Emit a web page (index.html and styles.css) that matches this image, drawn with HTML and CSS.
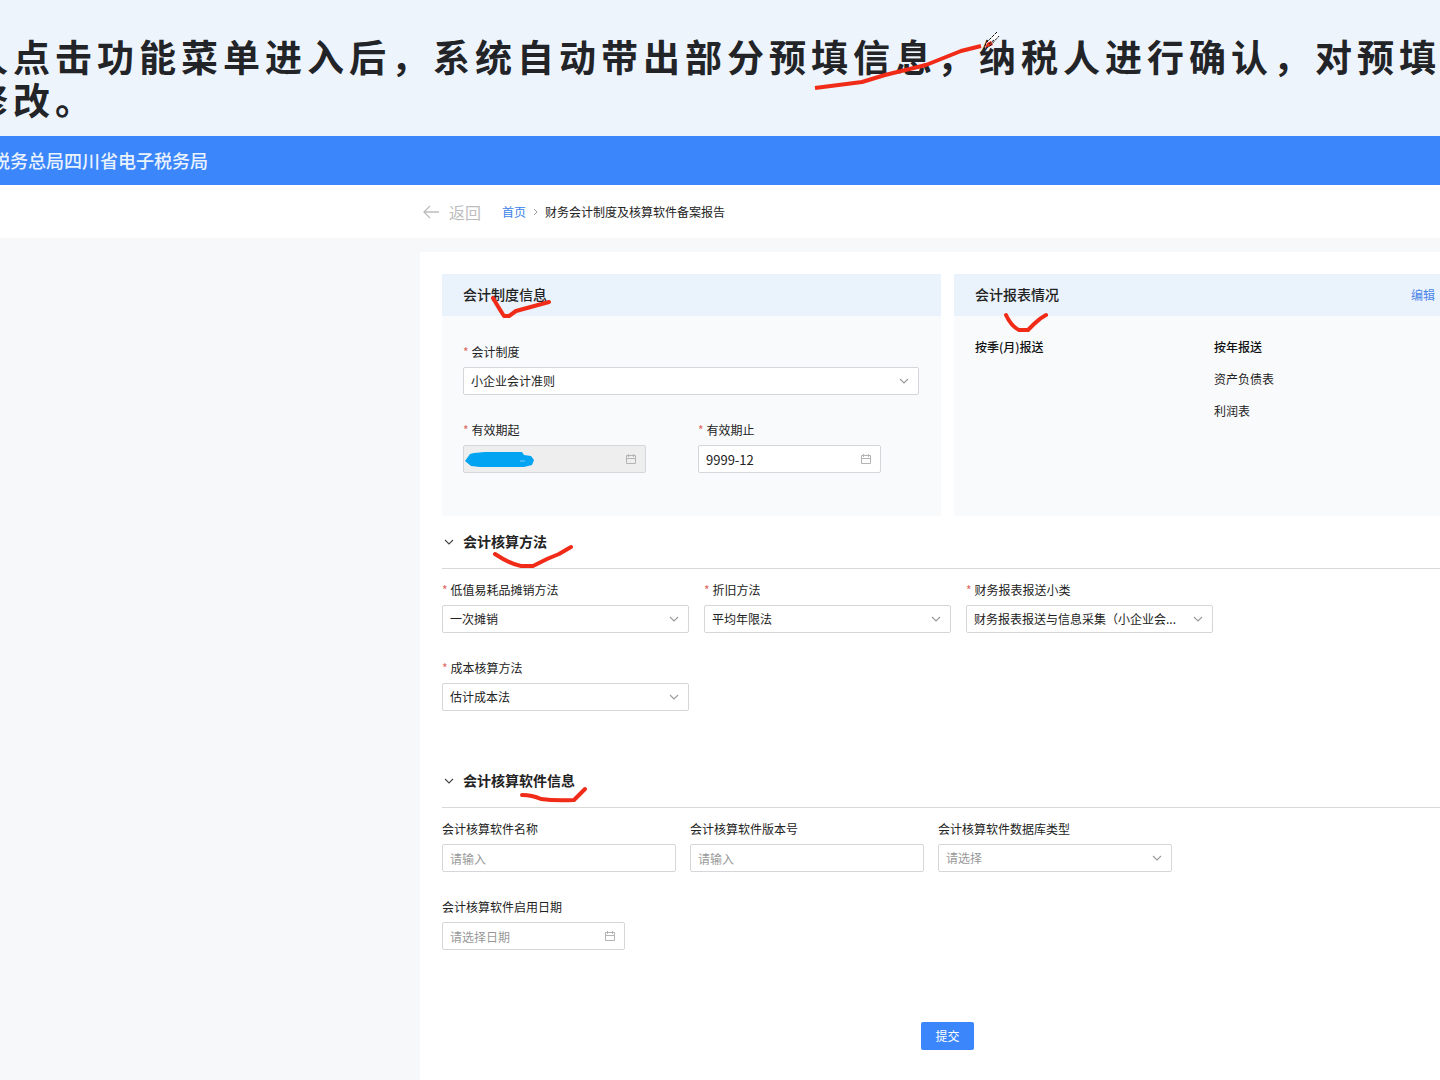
FILE: index.html
```html
<!DOCTYPE html>
<html lang="zh-CN">
<head>
<meta charset="utf-8">
<meta name="viewport" content="width=device-width, initial-scale=1">
<title>财务会计制度及核算软件备案报告</title>
<link rel="stylesheet" href="styles.css">
</head>
<body>
<svg class="symbols" aria-hidden="true">
  <symbol id="chevron" viewBox="0 0 10 10"><path d="M1 3l4 4 4-4" fill="none" stroke="currentColor" stroke-width="1.1"/></symbol>
  <symbol id="calendar" viewBox="0 0 12 12"><path d="M1.500 2.500h9v8h-9zM1.500 5.500h9M3.500 1v3M8.500 1v3" fill="none" stroke="currentColor"/></symbol>
</svg>
<div class="page">
  <p class="caption">人点击功能菜单进入后，系统自动带出部分预填信息，纳税人进行确认，对预填<br>修改。</p>
  <header class="topbar"><span class="topbar-name">税务总局四川省电子税务局</span></header>
  <nav class="crumbs" aria-label="面包屑">
    <a class="back" href="#"><svg class="back-icon" viewBox="0 0 18 14" aria-hidden="true"><path d="M8 1L2 7l6 6M2 7h15" fill="none" stroke="currentColor" stroke-width="1.3"/></svg>返回</a>
    <a class="home" href="#">首页</a>
    <svg class="crumb-sep" viewBox="0 0 5 8" aria-hidden="true"><path d="M1 1l3 3-3 3" fill="none" stroke="currentColor"/></svg>
    <span>财务会计制度及核算软件备案报告</span>
  </nav>
  <main class="workspace">
    <form class="panel">
      <div class="cards">
        <section class="card">
          <header class="card-head"><h2 class="title">会计制度信息</h2></header>
          <div class="card-form">
            <div class="field">
              <label class="label required" for="system">会计制度</label>
              <div class="control"><select class="box" id="system"><option>小企业会计准则</option></select><svg class="chev" aria-hidden="true"><use href="#chevron"/></svg></div>
            </div>
            <div class="dates">
              <div class="field">
                <label class="label required" for="from">有效期起</label>
                <div class="control"><input class="box" id="from" type="text" disabled><svg class="cal" aria-hidden="true"><use href="#calendar"/></svg></div>
              </div>
              <div class="field">
                <label class="label required" for="to">有效期止</label>
                <div class="control"><input class="box date-value" id="to" type="text" value="9999-12"><svg class="cal" aria-hidden="true"><use href="#calendar"/></svg></div>
              </div>
            </div>
          </div>
        </section>
        <section class="card">
          <header class="card-head"><h2 class="title">会计报表情况</h2><a class="edit" href="#">编辑</a></header>
          <div class="card-reports">
            <table class="reports">
              <thead><tr><th scope="col">按季(月)报送</th><th scope="col">按年报送</th></tr></thead>
              <tbody><tr><td></td><td>资产负债表</td></tr><tr><td></td><td>利润表</td></tr></tbody>
            </table>
          </div>
        </section>
      </div>

      <section class="section">
        <header class="section-head"><svg class="fold" aria-hidden="true"><use href="#chevron"/></svg><h2 class="title">会计核算方法</h2></header>
        <div class="fields methods">
          <div class="field">
            <label class="label required" for="amortize">低值易耗品摊销方法</label>
            <div class="control"><select class="box" id="amortize"><option>一次摊销</option></select><svg class="chev" aria-hidden="true"><use href="#chevron"/></svg></div>
          </div>
          <div class="field">
            <label class="label required" for="depreciate">折旧方法</label>
            <div class="control"><select class="box" id="depreciate"><option>平均年限法</option></select><svg class="chev" aria-hidden="true"><use href="#chevron"/></svg></div>
          </div>
          <div class="field">
            <label class="label required" for="category">财务报表报送小类</label>
            <div class="control"><select class="box" id="category"><option>财务报表报送与信息采集（小企业会...</option></select><svg class="chev" aria-hidden="true"><use href="#chevron"/></svg></div>
          </div>
          <div class="field">
            <label class="label required" for="cost">成本核算方法</label>
            <div class="control"><select class="box" id="cost"><option>估计成本法</option></select><svg class="chev" aria-hidden="true"><use href="#chevron"/></svg></div>
          </div>
        </div>
      </section>

      <section class="section">
        <header class="section-head"><svg class="fold" aria-hidden="true"><use href="#chevron"/></svg><h2 class="title">会计核算软件信息</h2></header>
        <div class="fields software">
          <div class="field">
            <label class="label" for="sw-name">会计核算软件名称</label>
            <div class="control"><input class="box" id="sw-name" type="text" placeholder="请输入"></div>
          </div>
          <div class="field">
            <label class="label" for="sw-version">会计核算软件版本号</label>
            <div class="control"><input class="box" id="sw-version" type="text" placeholder="请输入"></div>
          </div>
          <div class="field">
            <label class="label" for="sw-db">会计核算软件数据库类型</label>
            <div class="control"><select class="box empty" id="sw-db"><option>请选择</option></select><svg class="chev" aria-hidden="true"><use href="#chevron"/></svg></div>
          </div>
          <div class="field short">
            <label class="label" for="sw-date">会计核算软件启用日期</label>
            <div class="control"><input class="box" id="sw-date" type="text" placeholder="请选择日期"><svg class="cal" aria-hidden="true"><use href="#calendar"/></svg></div>
          </div>
        </div>
      </section>
      <div class="actions"><button class="submit" type="button">提交</button></div>
    </form>
  </main>

  <!-- Presenter's pen marks, drawn over the page -->
  <svg class="ink" width="1100" height="820" aria-hidden="true">
    <g fill="none" stroke="#f02b18" stroke-width="4" stroke-linecap="round" stroke-linejoin="round">
      <path d="M815 88L862 82L885 75L926 65L961 51L981 46" stroke-linecap="butt"/>
      <path d="M493 298Q500 310 504 316H509L516 311L549 302"/>
      <path d="M1006 315Q1011 326 1019 330H1028L1034 324Q1040 318 1046 315"/>
      <path d="M495 554Q510 564 521 566H533L547 559L559 554L571 547"/>
      <path d="M522 795Q532 795 541 799Q555 801 574 800L585 789"/>
    </g>
    <path d="M465 461L470 454L474 453L485 452H522L524 455L531 456L534 460L532 465L524 467H480L471 466Z" fill="#03a4f1"/>
    <path d="M520 461H525" stroke="#7fcdf5"/>
    <path d="M997 32L986 43L984 49L990 46L999 36" fill="#fff"/>
    <path d="M987 43L991 41L993 45L985 48Z" fill="#e8301c"/>
    <path d="M997 32L986 43L984 49L990 46L999 36M994 40L989 44" fill="none" stroke="#111" stroke-dasharray="3 1"/>
  </svg>
</div>
</body>
</html>
```
FILE: styles.css
```css
* { box-sizing: border-box; }

body {
  margin: 0;
  background: #f6f8fa;
  color: #222;
  font: 12px/18px "Noto Sans CJK SC", sans-serif;
}

a { text-decoration: none; }
.symbols { display: none; }

.page {
  position: relative;
  display: flex;
  flex-direction: column;
  min-height: 100vh;
  overflow: hidden;
  background: linear-gradient(#eef4fc 136px, transparent 136px);
}

.caption {
  margin: 0 0 0 -29px;
  padding: 35px 0 15px;
  color: #222427;
  font-size: 37px;
  font-weight: 700;
  line-height: 43px;
  letter-spacing: 5px;
  white-space: nowrap;
}

.topbar {
  display: flex;
  align-items: center;
  height: 49px;
  padding-bottom: 2px;
  background: #3b86fb;
  color: #e9f2ff;
}

.topbar-name {
  margin-left: -8px;
  font-size: 18px;
  font-weight: 500;
  line-height: 24px;
  white-space: nowrap;
}

.crumbs {
  display: flex;
  align-items: center;
  height: 53px;
  padding-left: 422px;
  background: #fff;
  white-space: nowrap;
}

.back {
  display: flex;
  align-items: center;
  gap: 9px;
  margin-right: 21px;
  color: #bdbdbd;
  font-size: 16px;
}

.back-icon { width: 18px; height: 14px; }
.home { color: #3b7fe8; }
.crumb-sep { width: 5px; height: 8px; margin: 0 7px; color: #999; }

.workspace {
  flex: 1;
  display: flex;
  padding: 14px 0 0 420px;
}

/* The form is wider than the window and runs off its right side */
.panel {
  flex: 1;
  margin-right: -35px;
  padding: 22px 22px 30px;
  background: #fff;
}

.cards {
  display: grid;
  grid-template-columns: 1fr 1fr;
  gap: 13px;
}

.card { background: #f9fafc; }

.card-head {
  display: flex;
  align-items: center;
  justify-content: space-between;
  height: 42px;
  padding: 0 18px 0 21px;
  background: #eaf2fc;
}

.title {
  margin: 0;
  padding-bottom: 2px;
  font-size: 14px;
  font-weight: 500;
  line-height: 20px;
}

.edit { color: #4a86ea; }

.card-form {
  display: grid;
  gap: 26px;
  padding: 27px 22px 43px 21px;
}

.dates {
  display: grid;
  grid-template-columns: repeat(2, minmax(0, 183px));
  gap: 52px;
}

.card-reports { padding: 15px 0 0 21px; }

.reports {
  width: 100%;
  table-layout: fixed;
  border-collapse: collapse;
}

.reports th,
.reports td {
  height: 32px;
  padding: 0;
  text-align: left;
  font-weight: 400;
}

.reports th { color: #111; font-weight: 500; }

.section + .section { margin-top: 44px; }

.section-head {
  display: flex;
  align-items: center;
  gap: 9px;
  height: 53px;
  padding-left: 2px;
  border-bottom: 1px solid #d8d8d8;
}

.section-head .title { font-weight: 700; }

.fold { width: 10px; height: 10px; color: #444; }

.fields {
  display: grid;
  row-gap: 26px;
  padding-top: 12px;
}

.methods {
  grid-template-columns: repeat(3, minmax(0, 247px));
  column-gap: 15px;
}

.software {
  grid-template-columns: repeat(3, minmax(0, 234px));
  column-gap: 14px;
}

.field { display: grid; gap: 6px; }
.short { width: 183px; }
.label { white-space: nowrap; }

.required::before {
  content: "*";
  margin-right: 3px;
  color: #e0655c;
}

.control { position: relative; }

.box {
  display: block;
  width: 100%;
  height: 28px;
  margin: 0;
  padding: 0 7px;
  border: 1px solid #d4d6d9;
  border-radius: 2px;
  background: #fff;
  color: #222;
  font: inherit;
  appearance: none;
}

.box:disabled { background: #eee; }
.box::placeholder { color: #999; opacity: 1; }
.empty { color: #999; }
.date-value { font-size: 13px; }

.chev,
.cal {
  position: absolute;
  top: 9px;
  right: 10px;
  width: 10px;
  height: 10px;
  color: #999;
  pointer-events: none;
}

.cal { top: 8px; right: 9px; width: 12px; height: 12px; color: #b4b4b4; }

.actions {
  display: flex;
  justify-content: center;
  margin-top: 72px;
}

.submit {
  padding: 5px 14px;
  border: 0;
  border-radius: 2px;
  background: #3b86fb;
  color: #fff;
  font: inherit;
}

.ink {
  position: absolute;
  top: 0;
  left: 0;
  pointer-events: none;
}
```
